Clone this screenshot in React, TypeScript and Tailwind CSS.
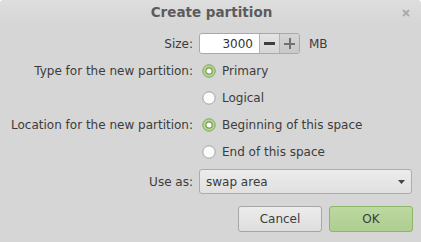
import React, { useState } from 'react';

const font = { fontFamily: '"DejaVu Sans", "Noto Sans", sans-serif' };

function Radio({ checked }: { checked: boolean }) {
  return (
    <svg width="14" height="14" viewBox="0 0 14 14" className="shrink-0">
      {checked ? (
        <>
          <circle cx="7" cy="7" r="6.2" fill="#b7d596" stroke="#7ea857" strokeWidth="1" />
          <circle cx="7" cy="7" r="3.2" fill="#ffffff" stroke="#6f9c48" strokeWidth="1.2" />
        </>
      ) : (
        <circle cx="7" cy="7" r="6.2" fill="#fbfbfb" stroke="#a2a2a2" strokeWidth="1" />
      )}
    </svg>
  );
}

function RadioRow({ label, checked, onClick }: { label: string; checked: boolean; onClick: () => void }) {
  return (
    <button onClick={onClick} className="flex items-center gap-[6px] pl-[3px] h-[27px] text-[12px] text-[#3c3c3c]">
      <Radio checked={checked} />
      <span>{label}</span>
    </button>
  );
}

export default function App() {
  const [size, setSize] = useState(3000);
  const [type, setType] = useState('primary');
  const [loc, setLoc] = useState('begin');

  return (
    <div className="w-[421px] h-[242px] bg-[#d6d6d6] rounded-t-[4px] overflow-hidden" style={font}>
      <div className="relative h-[24px] flex items-center justify-center bg-gradient-to-b from-[#dedede] to-[#d6d6d6]">
        <span className="text-[13.5px] font-bold text-[#5c5c5c] pl-[2px]">Create partition</span>
        <svg width="8" height="8" viewBox="0 0 8 8" className="absolute right-[11px] top-[9px]">
          <path d="M1 1 L7 7 M7 1 L1 7" stroke="#ababab" strokeWidth="2" />
        </svg>
      </div>

      <div className="grid grid-cols-[193px_1fr] gap-x-[6px] mt-[9px] text-[12px] text-[#3c3c3c]">
        <div className="h-[21px] flex items-center justify-end">Size:</div>
        <div className="h-[21px] flex items-center">
          <div className="flex h-[21px] border border-[#a9a9a9] rounded-[3px] overflow-hidden">
            <div className="w-[59px] bg-white flex items-center justify-end pr-[6px] text-[#333]">{size}</div>
            <button
              onClick={() => setSize(size - 1)}
              className="w-[20px] border-l border-[#b4b4b4] bg-gradient-to-b from-[#e4e4e4] to-[#d6d6d6] flex items-center justify-center"
            >
              <span className="block w-[11px] h-[3px] bg-[#3f3f3f]" />
            </button>
            <button
              onClick={() => setSize(size + 1)}
              className="w-[20px] border-l border-[#b4b4b4] bg-gradient-to-b from-[#d4d4d4] to-[#c8c8c8] flex items-center justify-center relative"
            >
              <span className="block w-[11px] h-[2px] bg-[#707070]" />
              <span className="absolute w-[2px] h-[11px] bg-[#707070]" />
            </button>
          </div>
          <span className="ml-[9px]">MB</span>
        </div>

        <div className="h-[27px] mt-[3px] flex items-center justify-end">Type for the new partition:</div>
        <div className="mt-[3px]">
          <RadioRow label="Primary" checked={type === 'primary'} onClick={() => setType('primary')} />
        </div>
        <div />
        <div>
          <RadioRow label="Logical" checked={type === 'logical'} onClick={() => setType('logical')} />
        </div>

        <div className="h-[27px] flex items-center justify-end">Location for the new partition:</div>
        <div>
          <RadioRow label="Beginning of this space" checked={loc === 'begin'} onClick={() => setLoc('begin')} />
        </div>
        <div />
        <div>
          <RadioRow label="End of this space" checked={loc === 'end'} onClick={() => setLoc('end')} />
        </div>

        <div className="h-[25px] mt-[4px] flex items-center justify-end">Use as:</div>
        <div className="mt-[4px] pr-[9px]">
          <div className="h-[25px] flex items-center justify-between border border-[#acacac] rounded-[3px] bg-gradient-to-b from-[#ececec] to-[#e0e0e0] pl-[6px] pr-[6px]">
            <span>swap area</span>
            <svg width="7" height="4" viewBox="0 0 7 4">
              <path d="M0 0 L7 0 L3.5 4 Z" fill="#444" />
            </svg>
          </div>
        </div>
      </div>

      <div className="flex justify-end gap-[7px] pr-[8px] mt-[12px] text-[12px]">
        <button className="w-[84px] h-[26px] border border-[#a6a6a6] rounded-[3px] bg-gradient-to-b from-[#ececec] to-[#dedede] text-[#3c3c3c]">
          Cancel
        </button>
        <button className="w-[84px] h-[26px] border border-[#8fb46c] rounded-[3px] bg-gradient-to-b from-[#bcd9a0] to-[#aecd8f] text-[#3c3c3c]">
          OK
        </button>
      </div>
    </div>
  );
}
